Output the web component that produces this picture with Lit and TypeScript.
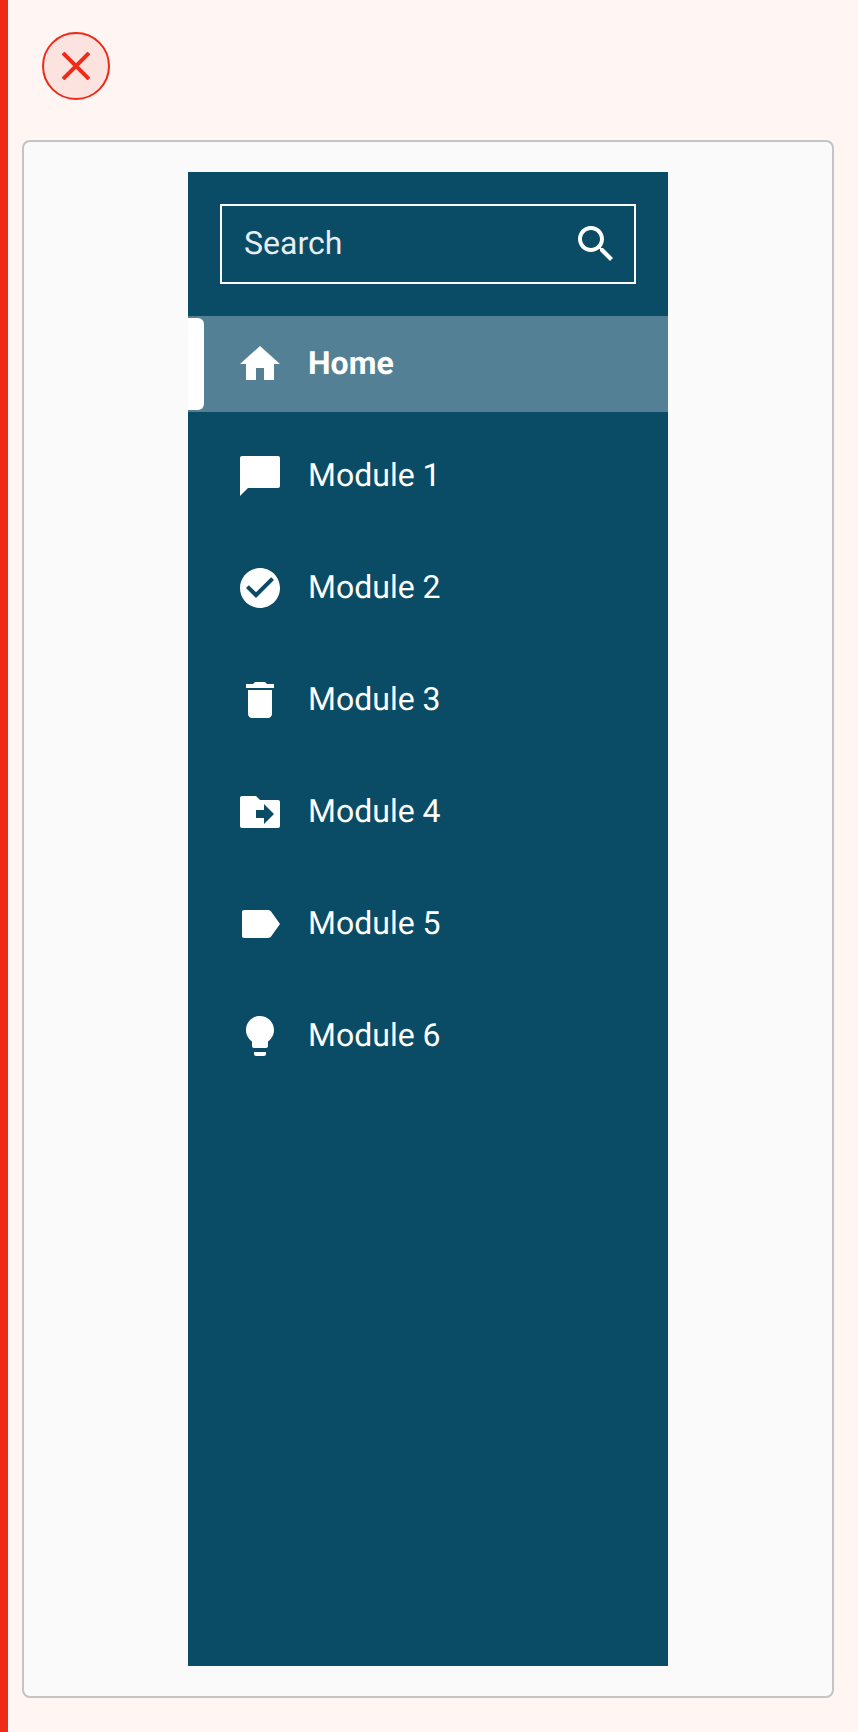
import { LitElement, html, css, svg } from 'lit';
import { customElement } from 'lit/decorators.js';

// material icon paths, 24 unit grid
const ICONS = {
  home: svg`<path d="M10 20v-6h4v6h5v-8h3L12 3 2 12h3v8z"/>`,
  chat: svg`<path d="M21 2H3c-.55 0-1 .45-1 1v19l4-4h15c.55 0 1-.45 1-1V3c0-.55-.45-1-1-1z"/>`,
  check: svg`<path d="M12 2C6.48 2 2 6.48 2 12s4.48 10 10 10 10-4.48 10-10S17.52 2 12 2zm-2 15-5-5 1.41-1.41L10 14.17l7.59-7.59L19 8l-9 9z"/>`,
  trash: svg`<path d="M6 19c0 1.1.9 2 2 2h8c1.1 0 2-.9 2-2V7H6v12zM19 4h-3.5l-1-1h-5l-1 1H5v2h14V4z"/>`,
  folder: svg`<path d="M21 6h-9l-2-2H3c-.55 0-1 .45-1 1v14c0 .55.45 1 1 1h18c.55 0 1-.45 1-1V7c0-.55-.45-1-1-1zm-7 12v-3h-4v-4h4V8l5 5-5 5z"/>`,
  label: svg`<path d="M17.63 5.84C17.27 5.33 16.67 5 16 5L4 5.01c-.55 0-1 .44-1 .99v12c0 .55.45.99 1 .99L16 19c.67 0 1.27-.33 1.63-.84L22 12l-4.37-6.16z"/>`,
  bulb: svg`<path d="M9 21c0 .55.45 1 1 1h4c.55 0 1-.45 1-1v-1H9v1zm3-19C8.14 2 5 5.14 5 9c0 2.38 1.19 4.47 3 5.74V17c0 .55.45 1 1 1h6c.55 0 1-.45 1-1v-2.26c1.81-1.27 3-3.36 3-5.74 0-3.86-3.14-7-7-7z"/>`,
  search: svg`<path d="M15.5 14h-.79l-.28-.27C15.41 12.59 16 11.11 16 9.5 16 5.91 13.09 3 9.5 3S3 5.91 3 9.5 5.91 16 9.5 16c1.61 0 3.09-.59 4.23-1.57l.27.28v.79l5 4.99L20.49 19l-4.99-5zm-6 0C7.01 14 5 11.99 5 9.5S7.01 5 9.5 5 14 7.01 14 9.5 11.99 14 9.5 14z"/>`,
};

type IconName = keyof typeof ICONS;

const NAV: { icon: IconName; label: string; active?: boolean }[] = [
  { icon: 'home', label: 'Home', active: true },
  { icon: 'chat', label: 'Module 1' },
  { icon: 'check', label: 'Module 2' },
  { icon: 'trash', label: 'Module 3' },
  { icon: 'folder', label: 'Module 4' },
  { icon: 'label', label: 'Module 5' },
  { icon: 'bulb', label: 'Module 6' },
];

@customElement('app-root')
export class AppRoot extends LitElement {
  static styles = css`
    :host {
      display: block;
      font-family: Roboto, "Liberation Sans", sans-serif;
      text-rendering: geometricPrecision;
    }

    .page {
      box-sizing: border-box;
      height: 1732px;
      padding: 32px 24px 34px 14px;
      background: #fff5f3;
      border-left: 8px solid #ee2a18;
      display: flex;
      flex-direction: column;
      gap: 40px;
    }

    .close {
      box-sizing: border-box;
      width: 68px;
      height: 68px;
      flex: none;
      margin-left: 20px;
      border: 2px solid #ee2a18;
      border-radius: 50%;
      background: #fde3e0;
      display: flex;
      align-items: center;
      justify-content: center;
    }

    .close svg {
      width: 28px;
      height: 28px;
      stroke: #ee2a18;
      stroke-width: 4;
      fill: none;
    }

    .frame {
      box-sizing: border-box;
      flex: 1;
      padding: 30px 164px;
      background: #fafafa;
      border: 2px solid #c4c4c4;
      border-radius: 8px;
      display: flex;
    }

    .sidebar {
      flex: 1;
      background: #0a4b66;
      color: #fff;
      padding-top: 32px;
      display: flex;
      flex-direction: column;
    }

    .search {
      box-sizing: border-box;
      height: 80px;
      margin: 0 32px;
      padding: 0 14px 0 22px;
      border: 2px solid #fff;
      display: flex;
      align-items: center;
      justify-content: space-between;
      font-size: 32px;
      color: #e7edf0;
    }

    .search svg {
      width: 48px;
      height: 48px;
      fill: #fff;
    }

    .text {
      margin-bottom: 2px;
    }

    nav {
      margin-top: 32px;
      display: flex;
      flex-direction: column;
      gap: 16px;
    }

    .item {
      position: relative;
      box-sizing: border-box;
      height: 96px;
      padding-left: 48px;
      display: flex;
      align-items: center;
      gap: 24px;
      font-size: 32px;
    }

    .item svg {
      width: 48px;
      height: 48px;
      fill: #fff;
      flex: none;
    }

    .item.active {
      background: #548095;
      font-weight: 700;
    }

    .item.active::before {
      content: '';
      position: absolute;
      left: 0;
      top: 2px;
      bottom: 2px;
      width: 16px;
      background: #fff;
      border-radius: 0 6px 6px 0;
    }
  `;

  render() {
    return html`
      <div class="page">
        <div class="close">
          <svg viewBox="0 0 28 28"><path d="M1 1l26 26M27 1L1 27"/></svg>
        </div>
        <div class="frame">
          <div class="sidebar">
            <div class="search">
              <span class="text">Search</span>
              <svg viewBox="0 0 24 24">${ICONS.search}</svg>
            </div>
            <nav>
              ${NAV.map(
                (n) => html`
                  <div class="item ${n.active ? 'active' : ''}">
                    <svg viewBox="0 0 24 24">${ICONS[n.icon]}</svg>
                    <span class="text">${n.label}</span>
                  </div>
                `
              )}
            </nav>
          </div>
        </div>
      </div>
    `;
  }
}
